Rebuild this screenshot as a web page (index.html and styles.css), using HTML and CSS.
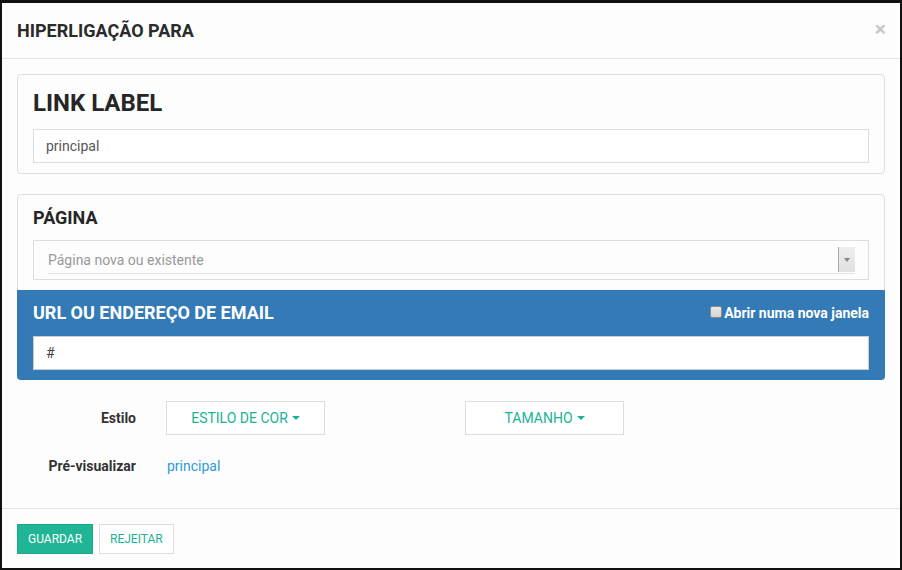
FILE: index.html
```html
<!DOCTYPE html>
<html lang="pt">
<head>
    <meta charset="utf-8">
    <title>Hiperligação para</title>
    <link rel="stylesheet" href="styles.css">
</head>
<body>

  <div class="modal">

    <div class="modal-header">
      <h4 class="modal-title">HIPERLIGAÇÃO PARA</h4>
      <span class="close">&times;</span>
    </div>

    <div class="modal-body">

      <div class="panel panel-label">
        <h2>LINK LABEL</h2>
        <div class="input">principal</div>
      </div>

      <div class="panel panel-page">
        <h3>PÁGINA</h3>
        <div class="select">
          <div class="select-inner">
            <span class="placeholder">Página nova ou existente</span>
            <span class="select-arrow"><i></i></span>
          </div>
        </div>

        <div class="url-box">
          <div class="url-head">
            <h3>URL OU ENDEREÇO DE EMAIL</h3>
            <label class="check"><span class="box"></span>Abrir numa nova janela</label>
          </div>
          <div class="input">#</div>
        </div>
      </div>

      <div class="form-row">
        <label class="form-label">Estilo</label>
        <div class="form-col"><span class="btn-drop">ESTILO DE COR <i class="caret"></i></span></div>
        <div class="form-col"><span class="btn-drop">TAMANHO <i class="caret"></i></span></div>
      </div>

      <div class="form-row">
        <label class="form-label">Pré-visualizar</label>
        <div class="form-col"><a class="preview" href="#">principal</a></div>
      </div>

    </div>

    <div class="modal-footer">
      <span class="btn btn-primary">GUARDAR</span>
      <span class="btn btn-default">REJEITAR</span>
    </div>

  </div>

</body>
</html>
```

FILE: styles.css
```css
html {
    height: 100%;
}

body {
    margin: 0;
    padding: 3px 2px 2px 2px;
    background: #111111;
    font-family: Roboto, "Liberation Sans", sans-serif;
    font-size: 14px;
    color: #333333;
    height: 100%;
    box-sizing: border-box;
}

.modal {
    background: #fdfdfd;
    height: 100%;
    display: flex;
    flex-direction: column;
}

.modal-header {
    display: flex;
    align-items: center;
    justify-content: space-between;
    padding: 16px 15px 15px;
    border-bottom: 1px solid #e5e5e5;
}

.modal-title {
    margin: 0;
    font-size: 18px;
    line-height: 24px;
    font-weight: bold;
    color: #2b2b2b;
}

.close {
    font-size: 21px;
    font-weight: bold;
    line-height: 1;
    color: #c8c8c8;
    margin: -4px -1px 0 0;
}

.modal-body {
    padding: 15px 15px 0;
    flex: 1;
}

.panel {
    border: 1px solid #dddddd;
    border-radius: 4px;
    background: #fdfdfd;
}

.panel-label {
    padding: 15px 15px 10px;
}

.panel-label h2 {
    margin: 0 0 13px;
    font-size: 24px;
    line-height: 26px;
    font-weight: bold;
    color: #262626;
}

.input {
    height: 34px;
    box-sizing: border-box;
    border: 1px solid #dddddd;
    background: #ffffff;
    padding: 0 12px;
    line-height: 32px;
    font-size: 14px;
    color: #555555;
}

.panel-page {
    margin-top: 20px;
    padding: 12px 15px 0;
}

.panel-page h3 {
    margin: 0 0 11px;
    font-size: 18px;
    line-height: 22px;
    font-weight: bold;
    color: #262626;
}

.select {
    height: 40px;
    box-sizing: border-box;
    border: 1px solid #dddddd;
    padding: 6px 13px 0 14px;
}

.select-inner {
    height: 26px;
    display: flex;
    justify-content: space-between;
    border-bottom: 1px solid #e3e3e3;
}

.placeholder {
    line-height: 26px;
    color: #999999;
    font-size: 14px;
}

.select-arrow {
    width: 17px;
    height: 25px;
    background: linear-gradient(#eeeeee, #e0e0e0);
    border-left: 1px solid #aaaaaa;
    box-sizing: border-box;
    display: flex;
    align-items: center;
    justify-content: center;
}

.select-arrow i {
    border-top: 4px solid #888888;
    border-left: 3px solid transparent;
    border-right: 3px solid transparent;
}

.url-box {
    margin: 10px -16px -1px;
    background: #337ab7;
    border-radius: 0 0 4px 4px;
    padding: 12px 16px 10px;
}

.url-head {
    display: flex;
    justify-content: space-between;
    align-items: center;
    margin-bottom: 12px;
}

.url-box h3 {
    margin: 0;
    color: #ffffff;
}

.check {
    color: #ffffff;
    font-size: 14px;
    font-weight: bold;
    display: flex;
    align-items: center;
}

.check .box {
    width: 10px;
    height: 10px;
    border: 1px solid #8a8a8a;
    background: linear-gradient(#e9e9e9, #d4d4d4);
    border-radius: 2px;
    margin: -3px 2px 0 0;
}

.url-box .input {
    color: #444444;
    border-color: #cccccc;
}

.form-row {
    display: grid;
    grid-template-columns: 119px 269px 269px;
    column-gap: 30px;
    align-items: center;
    height: 34px;
}

.panel-page + .form-row {
    margin-top: 21px;
}

.form-row + .form-row {
    margin-top: 14px;
}

.form-label {
    text-align: right;
    font-weight: bold;
    color: #333333;
}

.btn-drop {
    display: flex;
    align-items: center;
    justify-content: center;
    width: 159px;
    height: 34px;
    box-sizing: border-box;
    border: 1px solid #dddddd;
    color: #1ab394;
    background: #ffffff;
}

.caret {
    display: inline-block;
    margin-left: 4px;
    border-top: 4px solid #1ab394;
    border-left: 4px solid transparent;
    border-right: 4px solid transparent;
}

.preview {
    color: #2d9ad6;
    text-decoration: none;
    margin: -4px 0 0 1px;
}

.modal-footer {
    border-top: 1px solid #e5e5e5;
    padding: 15px 15px 14px;
    display: flex;
    gap: 6px;
}

.btn {
    height: 30px;
    box-sizing: border-box;
    line-height: 28px;
    padding: 0 10px;
    font-size: 12px;
    border: 1px solid transparent;
}

.btn-primary {
    background: #1fb595;
    border-color: #1aa687;
    color: #ffffff;
}

.btn-default {
    background: #ffffff;
    border-color: #dddddd;
    color: #1ab394;
}
```
